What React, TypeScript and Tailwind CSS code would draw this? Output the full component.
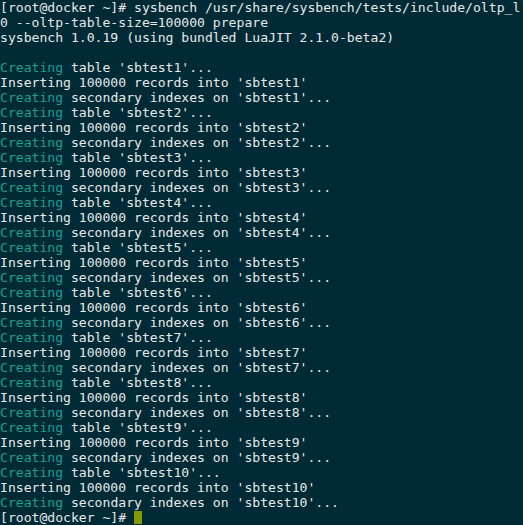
const lines: { text: string; prefix?: string }[] = [];

const head = [
  "[root@docker ~]# sysbench /usr/share/sysbench/tests/include/oltp_l",
  "0 --oltp-table-size=100000 prepare",
  "sysbench 1.0.19 (using bundled LuaJIT 2.1.0-beta2)",
  "",
];

for (let i = 1; i <= 10; i++) {
  lines.push({ prefix: "Creating", text: ` table 'sbtest${i}'...` });
  lines.push({ text: `Inserting 100000 records into 'sbtest${i}'` });
  lines.push({ prefix: "Creating", text: ` secondary indexes on 'sbtest${i}'...` });
}

export default function App() {
  return (
    <div className="w-[523px] h-[525px] overflow-hidden bg-[#002b36] text-[#e8e8e8] font-['DejaVu_Sans_Mono',monospace] text-[13.1px] leading-[15px]">
      {head.map((l, i) => (
        <div key={"h" + i} className="h-[15px] whitespace-pre">
          {l}
        </div>
      ))}
      {lines.map((l, i) => (
        <div key={i} className="h-[15px] whitespace-pre">
          {l.prefix && <span className="text-[#1f9e8f]">{l.prefix}</span>}
          {l.text}
        </div>
      ))}
      <div className="h-[15px] whitespace-pre flex items-start">
        <span>[root@docker ~]# </span>
        <span className="inline-block w-[8px] h-[13px] bg-[#869a00] mt-[1px]"></span>
      </div>
    </div>
  );
}
